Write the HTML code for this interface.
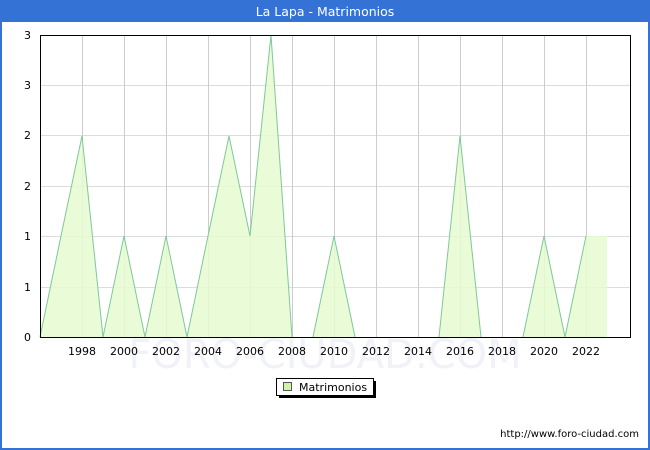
<!DOCTYPE html>
<html><head><meta charset="utf-8"><style>
html,body{margin:0;padding:0;width:650px;height:450px;overflow:hidden;background:#fff;font-family:"DejaVu Sans","Liberation Sans",sans-serif}
</style></head><body>
<svg width="650" height="450" xmlns="http://www.w3.org/2000/svg" font-family="DejaVu Sans, Liberation Sans, sans-serif">
<rect x="0" y="0" width="650" height="450" fill="#3473d5"/>
<rect x="2" y="22" width="646" height="426" fill="#fff"/>
<text x="325" y="16" fill="#fff" font-size="12.5" text-anchor="middle">La Lapa - Matrimonios</text>
<g stroke="#dcdcdc" stroke-width="1">
<line x1="40" y1="85.5" x2="630" y2="85.5"/><line x1="40" y1="135.5" x2="630" y2="135.5"/><line x1="40" y1="186.5" x2="630" y2="186.5"/><line x1="40" y1="236.5" x2="630" y2="236.5"/><line x1="40" y1="287.5" x2="630" y2="287.5"/>
</g>
<g stroke="#cccccc" stroke-width="1">
<line x1="82.5" y1="35" x2="82.5" y2="337"/><line x1="124.5" y1="35" x2="124.5" y2="337"/><line x1="166.5" y1="35" x2="166.5" y2="337"/><line x1="208.5" y1="35" x2="208.5" y2="337"/><line x1="250.5" y1="35" x2="250.5" y2="337"/><line x1="292.5" y1="35" x2="292.5" y2="337"/><line x1="334.5" y1="35" x2="334.5" y2="337"/><line x1="376.5" y1="35" x2="376.5" y2="337"/><line x1="418.5" y1="35" x2="418.5" y2="337"/><line x1="460.5" y1="35" x2="460.5" y2="337"/><line x1="502.5" y1="35" x2="502.5" y2="337"/><line x1="544.5" y1="35" x2="544.5" y2="337"/><line x1="586.5" y1="35" x2="586.5" y2="337"/>
</g>
<text x="325" y="368" fill="#f0f2f8" font-size="40" text-anchor="middle">FORO-CIUDAD.COM</text>
<polygon fill="#e6fcd0" fill-opacity="0.85" points="40,337 61,236 82,136 103,337 124,236 145,337 166,236 187,337 208,236 229,136 250,236 271,35 292,337 313,337 334,236 355,337 439,337 460,136 481,337 523,337 544,236 565,337 586,236 607,236 607,337"/>
<polyline fill="none" stroke="#7ec89a" stroke-width="1" points="40,337 61,236 82,136 103,337 124,236 145,337 166,236 187,337 208,236 229,136 250,236 271,35 292,337 M"/>
<polyline fill="none" stroke="#7ec89a" stroke-width="1" points="313,337 334,236 355,337"/>
<polyline fill="none" stroke="#7ec89a" stroke-width="1" points="439,337 460,136 481,337"/>
<polyline fill="none" stroke="#7ec89a" stroke-width="1" points="523,337 544,236 565,337 586,236"/>
<rect x="40.5" y="35.5" width="590" height="302" fill="none" stroke="#000"/>
<g font-size="11" fill="#000" text-anchor="end">
<text x="31" y="39">3</text><text x="31" y="89">3</text><text x="31" y="139">2</text><text x="31" y="190">2</text><text x="31" y="240">1</text><text x="31" y="291">1</text><text x="31" y="341">0</text>
</g>
<g font-size="11" fill="#000" text-anchor="middle">
<text x="82" y="355">1998</text><text x="124" y="355">2000</text><text x="166" y="355">2002</text><text x="208" y="355">2004</text><text x="250" y="355">2006</text><text x="292" y="355">2008</text><text x="334" y="355">2010</text><text x="376" y="355">2012</text><text x="418" y="355">2014</text><text x="460" y="355">2016</text><text x="502" y="355">2018</text><text x="544" y="355">2020</text><text x="586" y="355">2022</text>
</g>
<rect x="279" y="381" width="97" height="17" fill="#000"/>
<rect x="276.5" y="378.5" width="97" height="17" fill="#fff" stroke="#000"/>
<rect x="283.5" y="382.5" width="8" height="8" fill="#ccf5a8" stroke="#555"/>
<text x="299" y="391" font-size="11" fill="#000">Matrimonios</text>
<text x="639" y="437" font-size="10" fill="#000" text-anchor="end">http://www.foro-ciudad.com</text>
</svg>
</body></html>
